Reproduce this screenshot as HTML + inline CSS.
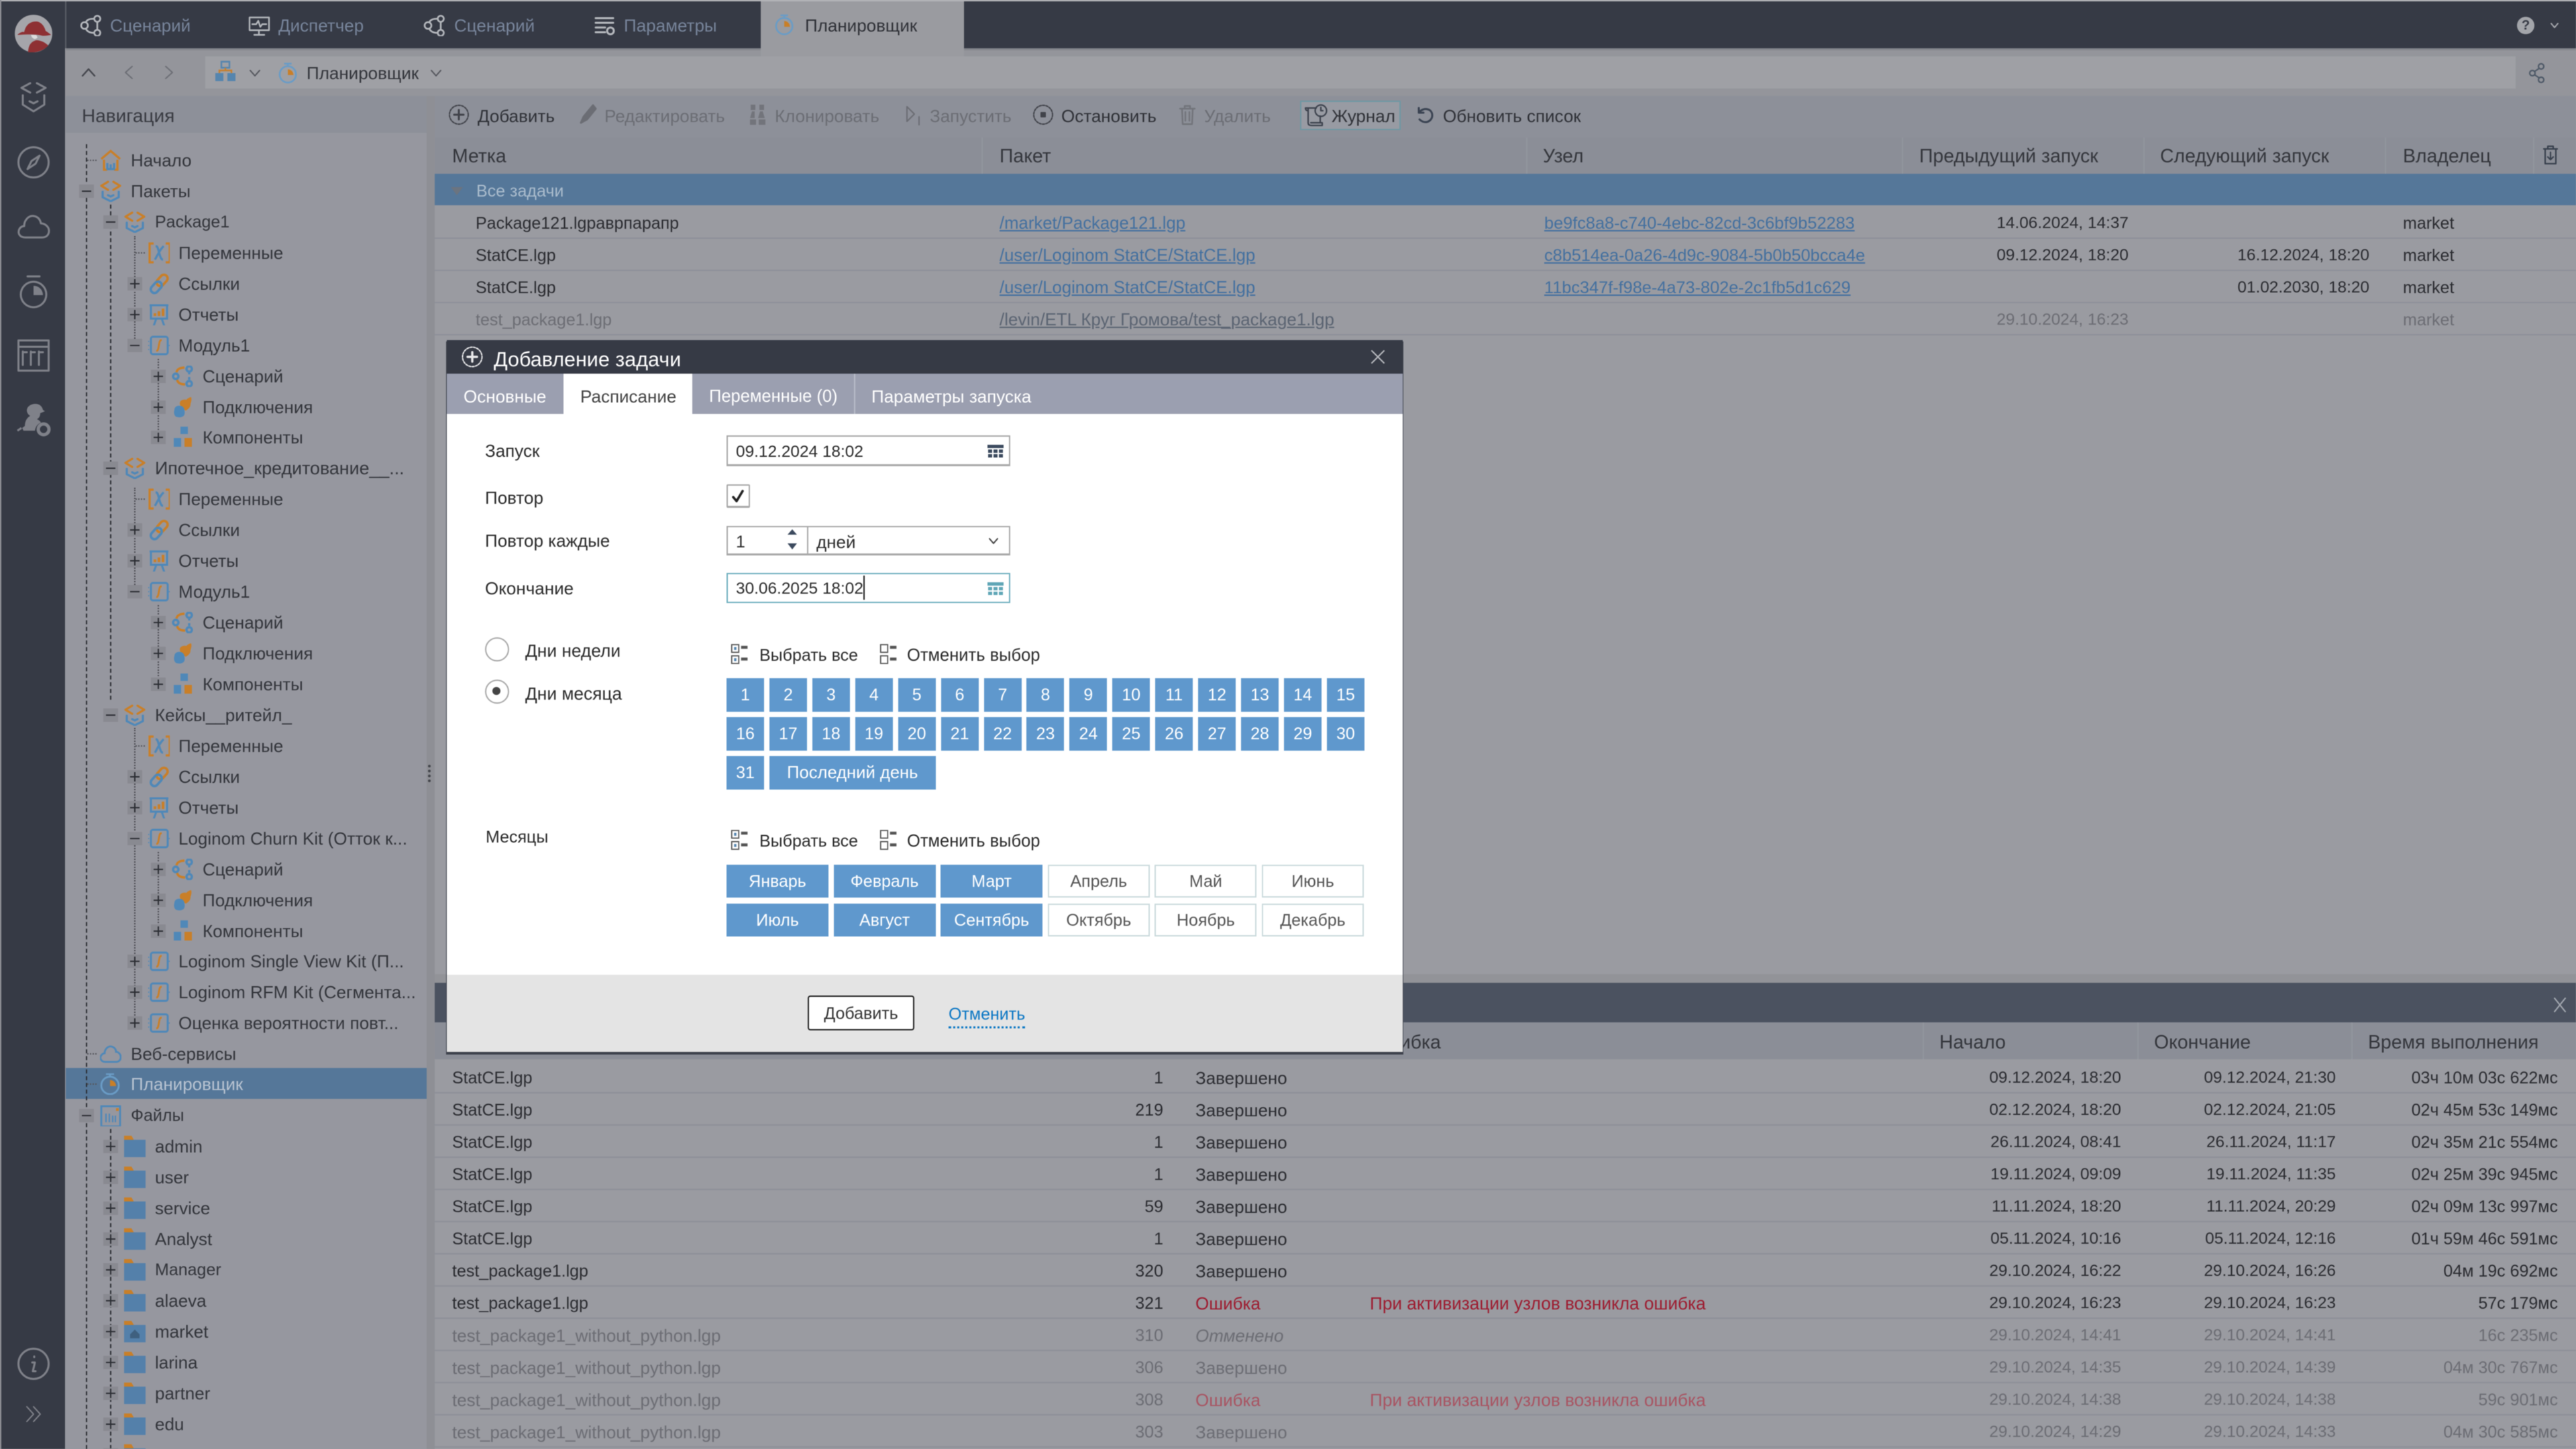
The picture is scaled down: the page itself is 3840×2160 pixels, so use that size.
<!DOCTYPE html>
<html lang="ru"><head><meta charset="utf-8"><title>Планировщик</title>
<style>
html,body{margin:0;padding:0;width:3840px;height:2160px;overflow:hidden;background:#9a9ba1}
body{font-family:"Liberation Sans","Noto Sans CJK SC",sans-serif;font-size:25px;color:#36383e;position:relative}
#root{position:absolute;left:0;top:0;width:3840px;height:2160px;overflow:hidden;filter:blur(.5px)}
.a,.b{position:absolute}
.x{position:absolute;white-space:nowrap;height:40px;line-height:40px}
svg.i{position:absolute;overflow:visible;fill:none}
svg.g{position:absolute;overflow:visible;fill:none;stroke-linecap:round;stroke-linejoin:round}
.t{position:absolute;left:98px;width:538px;height:46px;line-height:46px;font-size:26px;white-space:nowrap;color:#33353b}
.t span{position:absolute;top:0}
.t svg{position:absolute;top:7px;width:32px;height:32px;overflow:visible;fill:none}
.t b{position:absolute;top:13px;width:22px;height:20px;background:#898a91;display:block}
.t b:before{content:"";position:absolute;left:4px;top:9px;width:14px;height:2px;background:#2c2e34}
.t b.p:after{content:"";position:absolute;left:10px;top:3px;width:2px;height:14px;background:#2c2e34}
.t u{position:absolute;top:22px;height:0;width:14px;border-top:2px dotted #55565c;text-decoration:none;display:block}
.l0 span{left:97px}.l0 svg{left:51px}.l0 b{left:20px}.l0 u{left:32px}
.l1 span{left:133px}.l1 svg{left:87px}.l1 b{left:56px}.l1 u{left:68px}
.l2 span{left:168px}.l2 svg{left:123px}.l2 b{left:92px}.l2 u{left:104px}
.l3 span{left:204px}.l3 svg{left:158px}.l3 b{left:127px}.l3 u{left:139px}
.v{position:absolute;width:0;border-left:2px dotted #4a4b51}
.vd{border-left:2px dashed #2c2e34}
.tt{position:absolute;top:18px;height:40px;line-height:40px;color:#77849a;font-size:26px;white-space:nowrap}
.tb{position:absolute;top:152px;height:42px;line-height:42px;font-size:26px;color:#2f3137;white-space:nowrap}
.dis{color:#6b6d74}
.th{position:absolute;top:213px;height:40px;line-height:40px;font-size:28.4px;color:#34363c;white-space:nowrap}
.sep{position:absolute;width:2px;background:#92959e}
.r{position:absolute;left:648px;width:3192px;height:46px;border-bottom:2px solid #8d9099;line-height:50px;font-size:25px;white-space:nowrap;color:#2b2c31}
.r span{position:absolute;top:0}
.r.dim{color:#6c6d74}
.r a{color:#44709f;text-decoration:underline;font-size:25.7px}
.r.dim a{color:#5b6472;font-size:25.9px}
.c3 a{font-size:25.3px}
.c1{left:61px}.c2{left:842px}.c3{left:1654px}.c4{right:667px;font-size:24.4px}.c5{right:308px;font-size:24.4px}.c6{left:2934px}
.n{left:26px}.k{right:2106px}.s{left:1134px;font-size:26px}.o{left:1394px;font-size:26.2px}.h{right:678px;font-size:24.4px}.j{right:358px;font-size:24.4px}.w{right:27px}
.dim .n{font-size:26px}
.red{color:#9d1c30}.r.dim .red{color:#a85462}
.f{position:absolute;height:40px;line-height:40px;white-space:nowrap;font-size:26px;color:#2b2b2b}
.days{position:absolute;left:1083px;top:1011px;display:grid;grid-template-columns:repeat(15,56px);column-gap:7.93px;grid-auto-rows:50px;row-gap:8px}
.days div,.mon div{background:#5f98cd;color:#fff;text-align:center;line-height:51px;font-size:25px}
.mon{position:absolute;left:1083px;top:1289px;display:grid;grid-template-columns:repeat(6,152px);column-gap:7.6px;grid-auto-rows:49px;row-gap:9px}
.mon div.off{background:#fff;color:#555;box-shadow:inset 0 0 0 2px #cbdadd;}
.inp{position:absolute;background:#fff;box-sizing:border-box;border:2px solid #a9a9a9;border-bottom:3px solid #a9a9a9}
</style></head><body><div id="root">
<svg width="0" height="0" style="position:absolute"><defs>
<symbol id="pkg" viewBox="0 0 32 32"><g fill="none" stroke-width="3.2" stroke-linecap="round" stroke-linejoin="round"><path d="M12 2 2 8l10 6M20 2l10 6-10 6" stroke="#c97f28"/><path d="M4 17v8l12 6 12-6v-8M12 22l4 2 4-2" stroke="#4f88b8"/></g></symbol>
<symbol id="home" viewBox="0 0 32 32"><g fill="none" stroke-width="3.2"><path d="M2 14 16 2l14 12M6 15v15h5M26 15v15h-5" stroke="#c97f28"/><path d="M11 20v9h10v-9M16 22v7" stroke="#4f88b8"/></g></symbol>
<symbol id="var" viewBox="0 0 32 32"><g fill="none" stroke-width="3.2"><path d="M8 2H2v28h6M26 2h6v28h-6" stroke="#c97f28"/><path d="M11 6c3 0 3 2 5 9s3 11 6 11M23 6c-5 4-9 13-13 20" stroke="#4f88b8"/></g></symbol>
<symbol id="link" viewBox="0 0 32 32"><g fill="none" stroke-width="3.6"><rect x="15" y="1" width="11" height="19" rx="5.5" transform="rotate(42 20 11)" stroke="#c97f28"/><rect x="6" y="12" width="11" height="19" rx="5.5" transform="rotate(42 12 22)" stroke="#4f88b8"/></g></symbol>
<symbol id="rep" viewBox="0 0 32 32"><g fill="none" stroke-width="3"><path d="M2 2h28M4 2v20h24V2M12 22 8 33M20 22l4 11" stroke="#4f88b8"/></g><path d="M8 14h4v4H8zM14 11h4v7h-4zM20 7h4v11h-4z" fill="#c97f28"/></symbol>
<symbol id="mod" viewBox="0 0 32 32"><rect x="4" y="3" width="25" height="26" rx="3" fill="none" stroke="#4f88b8" stroke-width="3"/><path d="M0 9v2M0 15v2M0 21v2M32 15v2" stroke="#4f88b8" stroke-width="2.6"/><path d="M20 8c-3 0-3 2-4 7s-1 9-4 9" fill="none" stroke="#c97f28" stroke-width="2.8"/></symbol>
<symbol id="sc" viewBox="0 0 32 32"><g fill="none" stroke-width="3.4"><path d="M7 10c1-5 6-7 12-7M8 21c1 5 5 7 12 7" stroke="#c97f28"/><circle cx="26" cy="5" r="4" stroke="#4f88b8"/><circle cx="6" cy="16" r="4" stroke="#4f88b8"/><circle cx="26" cy="27" r="4" stroke="#4f88b8"/><path d="M26 10v3M26 17v4" stroke="#4f88b8"/></g></symbol>
<symbol id="con" viewBox="0 0 32 32"><path d="M12 10c0-5 7-6 10-5 1-2 5-4 7-4 1 4 0 7-1 10 0 6-4 8-7 10-4-2-9-6-9-11z" fill="#c97f28"/><path d="M4 20c0-5 5-7 9-6 3 0 6 3 6 7 1 4 0 8-3 9-3 2-8 1-10 0-3-3-3-7-2-10z" fill="#4f88b8"/></symbol>
<symbol id="cmp" viewBox="0 0 32 32"><path d="M13 0h11v11H13zM3 17h11v13H3z" fill="#4f88b8"/><path d="M19 17h11v13H19z" fill="#c97f28"/></symbol>
<symbol id="fol" viewBox="0 0 32 32"><path d="M0 0h11l4 7H0z" fill="#c97f28"/><path d="M0 6h32v27H0z" fill="#5480aa"/></symbol>
<symbol id="folh" viewBox="0 0 32 32"><path d="M0 0h11l4 7H0z" fill="#c97f28"/><path d="M0 6h32v27H0z" fill="#5480aa"/><path d="M9 20l7-7 7 7v6H9z" fill="#3f607f"/></symbol>
<symbol id="cloud" viewBox="0 0 32 32"><path d="M8 28C2 28 0 23 1 20s4-5 6-5c0-6 5-11 10-10 5 1 7 5 7 8 4 0 7 4 7 8s-3 7-7 7z" fill="none" stroke="#4f88b8" stroke-width="2.8"/></symbol>
<symbol id="clk" viewBox="0 0 32 32"><g fill="none" stroke-width="2.8"><circle cx="15" cy="18" r="13" stroke="#6a9cc6"/><path d="M9 1h12M15 1v4" stroke="#6a9cc6"/></g><path d="M15 10v9h9c0-5-4-9-9-9z" fill="#c97f28"/></symbol>
<symbol id="fil" viewBox="0 0 32 32"><rect x="2" y="2" width="28" height="30" fill="none" stroke="#4f88b8" stroke-width="2.8"/><path d="M9 26V13M14 26V13M19 26V16M23 26V16" stroke="#4f88b8" stroke-width="2.2"/><path d="M24 5h4v4h-4z" fill="#c97f28"/></symbol>
<symbol id="grey" viewBox="0 0 32 32"><g fill="none" stroke="#b4b7bc" stroke-width="2.6"><circle cx="7" cy="16" r="5"/><circle cx="26" cy="6" r="4.5"/><circle cx="26" cy="27" r="4.5"/><path d="M9 11c2-4 6-5 12-5M9 21c2 4 6 6 12 6M26 11v11"/></g></symbol>
<symbol id="selall" viewBox="0 0 32 36"><g fill="none" stroke="#555" stroke-width="2"><rect x="2" y="2" width="12" height="13"/><rect x="2" y="21" width="12" height="13"/></g><path d="M18 4h11v5H18zM18 24h11v5H18z" fill="#555"/><path d="M6 6h4v5H6zM6 25h4v5H6z" fill="#5585ae"/></symbol>
<symbol id="selnon" viewBox="0 0 32 36"><g fill="none" stroke="#555" stroke-width="2"><rect x="2" y="2" width="12" height="13"/><rect x="2" y="21" width="12" height="13"/></g><path d="M18 4h11v5H18zM18 24h11v5H18z" fill="#555"/></symbol>
</defs></svg>

<!-- background blocks -->
<div class="a" style="left:0;top:0;width:97px;height:2160px;background:#363a45"></div>
<div class="a" style="left:97px;top:0;width:2px;height:72px;background:#5a5d66"></div>
<div class="a" style="left:99px;top:0;width:3741px;height:72px;background:#363a45"></div>
<div class="a" style="left:98px;top:72px;width:3742px;height:71px;background:#94959b"></div>
<div class="a" style="left:98px;top:72px;width:3742px;height:3px;background:#85878d"></div>
<div class="a" style="left:306px;top:84px;width:3444px;height:48px;background:#9fa0a5"></div>
<div class="a" style="left:1134px;top:0;width:303px;height:84px;background:#9a9ba0"></div>
<div class="a" style="left:98px;top:143px;width:538px;height:55px;background:#8d9099"></div>
<div class="a" style="left:98px;top:198px;width:538px;height:1962px;background:#96979f"></div>
<div class="a" style="left:636px;top:143px;width:12px;height:2017px;background:#8e8f95"></div>
<div class="a" style="left:648px;top:143px;width:3192px;height:62px;background:#8d9099"></div>
<div class="a" style="left:648px;top:205px;width:3192px;height:54px;background:#8b8e97"></div>
<div class="a" style="left:648px;top:259px;width:3192px;height:47px;background:#557799"></div>
<div class="a" style="left:648px;top:306px;width:3192px;height:1152px;background:#9a9ba1"></div>
<div class="a" style="left:648px;top:1452px;width:3192px;height:13px;background:#929398"></div>
<div class="a" style="left:648px;top:1465px;width:3192px;height:59px;background:#4b5260"></div>
<div class="a" style="left:648px;top:1524px;width:3192px;height:55px;background:#8b8e97"></div>
<div class="a" style="left:0;top:0;width:3840px;height:2px;background:#b7b8bc"></div>
<div class="a" style="left:0;top:0;width:2px;height:2160px;background:#8b8c92"></div>
<div class="a" style="left:98px;top:1592px;width:538px;height:46px;background:#557799"></div>

<!-- left rail -->
<svg class="i" style="left:22px;top:22px" width="56" height="56" viewBox="0 0 56 56"><circle cx="28" cy="28" r="28" fill="#a5a5aa"/><path d="M4 30c4-4 8-5 10-4 2-10 8-16 18-16 6 0 12 6 14 14 3 2 6 4 8 6-6 1-10 2-14 1-6-2-20-2-36-1z" fill="#8e3033"/><path d="M20 56c0-10 4-16 12-18 8 0 14 4 18 8-6 6-14 10-24 10z" fill="#8e3033"/><path d="M24 30c2 6 6 8 10 4l-2-4z" fill="#dcdcdc"/></svg>
<svg class="g" style="left:30px;top:122px" width="40" height="46" viewBox="0 0 40 46" stroke="#7f8189" stroke-width="3"><path d="M15 2 2 9l13 7M25 2l13 7-13 7M4 20v14l16 10 16-10V20M14 29l6 3 6-3"/></svg>
<svg class="g" style="left:26px;top:218px" width="48" height="48" viewBox="0 0 48 48" stroke="#7f8189" stroke-width="3"><circle cx="24" cy="24" r="22.5"/><path d="M33 14 21 22l-6 12 12-8z"/></svg>
<svg class="g" style="left:26px;top:320px" width="48" height="36" viewBox="0 0 48 36" stroke="#7f8189" stroke-width="3"><path d="M12 34C4 34 1 29 2 24s5-7 8-7c0-9 7-16 14-15 7 1 10 6 11 11 6 0 12 5 12 11s-4 10-10 10z"/></svg>
<svg class="g" style="left:29px;top:410px" width="42" height="50" viewBox="0 0 42 50" stroke="#7f8189" stroke-width="3"><circle cx="21" cy="29" r="19"/><path d="M12 2h18"/><path d="M21 16v14h14c0-8-6-14-14-14z" fill="#7f8189" stroke="none"/></svg>
<svg class="g" style="left:26px;top:506px" width="48" height="48" viewBox="0 0 48 48" stroke="#7f8189" stroke-width="3"><rect x="1.5" y="1.5" width="45" height="45"/><path d="M2 11h44M8 18v20M20 18v20M32 18v20M8 19h6M20 19h6M32 19h6"/></svg>
<svg class="i" style="left:26px;top:601px" width="50" height="50" viewBox="0 0 50 50"><path d="M14 11c0-6 6-10 13-10 6 0 10 4 11 9l3 2-7 3c0 5-2 7-5 9 3 1 5 3 6 5-5 2-8 6-9 12H9l-2-4 4-3c0-8 4-13 8-15-3-2-5-5-5-8z" fill="#7f8189"/><circle cx="39" cy="39" r="8" fill="none" stroke="#7f8189" stroke-width="5"/><path d="M0 41l6-4" stroke="#7f8189" stroke-width="3"/></svg>
<svg class="g" style="left:26px;top:2009px" width="48" height="48" viewBox="0 0 48 48" stroke="#7f8189" stroke-width="3"><circle cx="24" cy="24" r="22.5"/><path d="M22 22h4l-3 13h4M25 13v1"/></svg>
<svg class="g" style="left:38px;top:2096px" width="24" height="24" viewBox="0 0 24 24" stroke="#7f8189" stroke-width="2"><path d="M2 1l10 11L2 23M12 1l10 11-10 11"/></svg>

<!-- top tabs -->
<svg class="i" style="left:119px;top:22px" width="32" height="32"><use href="#grey"/></svg><div class="tt" style="left:164px">Сценарий</div>
<svg class="g" style="left:370px;top:24px" width="33" height="30" viewBox="0 0 33 30" stroke="#b4b7bc" stroke-width="2.4"><path d="M2 2h29v19H2zM16 21v6M9 28h15M6 12h6l3-5 3 9 3-4h6"/></svg><div class="tt" style="left:415px">Диспетчер</div>
<svg class="i" style="left:631px;top:22px" width="32" height="32"><use href="#grey"/></svg><div class="tt" style="left:677px">Сценарий</div>
<svg class="g" style="left:886px;top:24px" width="32" height="30" viewBox="0 0 32 30" stroke="#b4b7bc" stroke-width="3"><path d="M2 3h26M2 10h26M2 17h14M2 24h14"/><circle cx="24" cy="22" r="5"/></svg><div class="tt" style="left:930px">Параметры</div>
<svg class="i" style="left:1155px;top:20px" width="30" height="34"><use href="#clk"/></svg><div class="tt" style="left:1200px;color:#303238">Планировщик</div>
<svg class="g" style="left:3751px;top:24px" width="28" height="28" viewBox="0 0 28 28"><circle cx="14" cy="14" r="13" fill="#a3a5aa"/></svg><div class="x" style="left:3759px;top:18px;color:#363a45;font-weight:bold;font-size:20px">?</div>
<svg class="g" style="left:3802px;top:34px" width="12" height="8" viewBox="0 0 12 8" stroke="#a3a5aa" stroke-width="2"><path d="M1 1l5 6 5-6"/></svg>

<!-- address bar -->
<svg class="g" style="left:122px;top:102px" width="20" height="12" viewBox="0 0 20 12" stroke="#45474e" stroke-width="2.4"><path d="M1 11 10 1l9 10"/></svg>
<svg class="g" style="left:186px;top:98px" width="12" height="20" viewBox="0 0 12 20" stroke="#6d6f76" stroke-width="2"><path d="M11 1 1 10l10 9"/></svg>
<svg class="g" style="left:246px;top:98px" width="12" height="20" viewBox="0 0 12 20" stroke="#6d6f76" stroke-width="2"><path d="M1 1l10 9-10 9"/></svg>
<svg class="i" style="left:320px;top:92px" width="32" height="32" viewBox="0 0 32 32"><path d="M10 0h12v9H10z" fill="none" stroke="#5585ae" stroke-width="2.4"/><path d="M1 17h12v12H1zM19 17h12v12H19z" fill="#5585ae"/><path d="M16 9v4M7 17v-4h18v4" stroke="#c67f2e" stroke-width="2.4" fill="none"/></svg>
<svg class="g" style="left:372px;top:104px" width="16" height="10" viewBox="0 0 16 10" stroke="#55575e" stroke-width="2"><path d="M1 1l7 8 7-8"/></svg>
<svg class="i" style="left:415px;top:92px" width="30" height="34"><use href="#clk"/></svg>
<div class="x" style="left:457px;top:89px;font-size:26px;color:#33353b">Планировщик</div>
<svg class="g" style="left:642px;top:104px" width="16" height="10" viewBox="0 0 16 10" stroke="#55575e" stroke-width="2"><path d="M1 1l7 8 7-8"/></svg>
<svg class="g" style="left:3770px;top:94px" width="26" height="30" viewBox="0 0 26 30" stroke="#4f5a68" stroke-width="2.2"><circle cx="18" cy="5" r="4"/><circle cx="5" cy="15" r="4"/><circle cx="18" cy="25" r="4"/><path d="M9 12l6-4M9 18l6 4"/></svg>

<!-- nav header -->
<div class="x" style="left:122px;top:153px;font-size:28px;color:#383a41">Навигация</div>

<!-- tree lines -->
<div class="v vd" style="left:128px;top:215px;height:1945px"></div>
<div class="v vd" style="left:164px;top:305px;height:738px"></div>
<div class="v vd" style="left:164px;top:1683px;height:477px"></div>
<div class="v" style="left:200px;top:352px;height:160px"></div>
<div class="v" style="left:200px;top:727px;height:145px"></div>
<div class="v" style="left:200px;top:1085px;height:445px"></div>
<div class="v" style="left:235px;top:535px;height:110px"></div>
<div class="v" style="left:235px;top:902px;height:110px"></div>
<div class="v" style="left:235px;top:1270px;height:110px"></div>
<div class="a" style="left:638px;top:1140px;width:5px;height:26px;border-left:4px dotted #44464c"></div>

<!-- tree -->
<div class="t l0" style="top:216px"><u></u><svg><use href="#home"/></svg><span>Начало</span></div>
<div class="t l0" style="top:262px"><b></b><svg><use href="#pkg"/></svg><span>Пакеты</span></div>
<div class="t l1" style="top:308px"><b></b><svg><use href="#pkg"/></svg><span style="font-size:25px">Package1</span></div>
<div class="t l2" style="top:354px"><u></u><svg><use href="#var"/></svg><span>Переменные</span></div>
<div class="t l2" style="top:400px"><b class="p"></b><svg><use href="#link"/></svg><span>Ссылки</span></div>
<div class="t l2" style="top:446px"><b class="p"></b><svg><use href="#rep"/></svg><span>Отчеты</span></div>
<div class="t l2" style="top:492px"><b></b><svg><use href="#mod"/></svg><span>Модуль1</span></div>
<div class="t l3" style="top:538px"><b class="p"></b><svg><use href="#sc"/></svg><span>Сценарий</span></div>
<div class="t l3" style="top:584px"><b class="p"></b><svg><use href="#con"/></svg><span>Подключения</span></div>
<div class="t l3" style="top:629px"><b class="p"></b><svg><use href="#cmp"/></svg><span>Компоненты</span></div>
<div class="t l1" style="top:675px"><b></b><svg><use href="#pkg"/></svg><span style="font-size:26.8px">Ипотечное_кредитование__...</span></div>
<div class="t l2" style="top:721px"><u></u><svg><use href="#var"/></svg><span>Переменные</span></div>
<div class="t l2" style="top:767px"><b class="p"></b><svg><use href="#link"/></svg><span>Ссылки</span></div>
<div class="t l2" style="top:813px"><b class="p"></b><svg><use href="#rep"/></svg><span>Отчеты</span></div>
<div class="t l2" style="top:859px"><b></b><svg><use href="#mod"/></svg><span>Модуль1</span></div>
<div class="t l3" style="top:905px"><b class="p"></b><svg><use href="#sc"/></svg><span>Сценарий</span></div>
<div class="t l3" style="top:951px"><b class="p"></b><svg><use href="#con"/></svg><span>Подключения</span></div>
<div class="t l3" style="top:997px"><b class="p"></b><svg><use href="#cmp"/></svg><span>Компоненты</span></div>
<div class="t l1" style="top:1043px"><b></b><svg><use href="#pkg"/></svg><span>Кейсы__ритейл_</span></div>
<div class="t l2" style="top:1089px"><u></u><svg><use href="#var"/></svg><span>Переменные</span></div>
<div class="t l2" style="top:1135px"><b class="p"></b><svg><use href="#link"/></svg><span>Ссылки</span></div>
<div class="t l2" style="top:1181px"><b class="p"></b><svg><use href="#rep"/></svg><span>Отчеты</span></div>
<div class="t l2" style="top:1227px"><b></b><svg><use href="#mod"/></svg><span>Loginom Churn Kit (Отток к...</span></div>
<div class="t l3" style="top:1273px"><b class="p"></b><svg><use href="#sc"/></svg><span>Сценарий</span></div>
<div class="t l3" style="top:1319px"><b class="p"></b><svg><use href="#con"/></svg><span>Подключения</span></div>
<div class="t l3" style="top:1365px"><b class="p"></b><svg><use href="#cmp"/></svg><span>Компоненты</span></div>
<div class="t l2" style="top:1410px"><b class="p"></b><svg><use href="#mod"/></svg><span>Loginom Single View Kit (П...</span></div>
<div class="t l2" style="top:1456px"><b class="p"></b><svg><use href="#mod"/></svg><span>Loginom RFM Kit (Сегмента...</span></div>
<div class="t l2" style="top:1502px"><b class="p"></b><svg><use href="#mod"/></svg><span>Оценка вероятности повт...</span></div>
<div class="t l0" style="top:1548px"><u></u><svg><use href="#cloud"/></svg><span>Веб-сервисы</span></div>
<div class="t l0" style="top:1593px;color:#b9c4d2"><u></u><svg><use href="#clk"/></svg><span>Планировщик</span></div>
<div class="t l0" style="top:1640px"><b></b><svg><use href="#fil"/></svg><span style="font-size:25px">Файлы</span></div>
<div class="t l1" style="top:1686px"><b class="p"></b><svg><use href="#fol"/></svg><span>admin</span></div>
<div class="t l1" style="top:1732px"><b class="p"></b><svg><use href="#fol"/></svg><span>user</span></div>
<div class="t l1" style="top:1778px"><b class="p"></b><svg><use href="#fol"/></svg><span>service</span></div>
<div class="t l1" style="top:1824px"><b class="p"></b><svg><use href="#fol"/></svg><span>Analyst</span></div>
<div class="t l1" style="top:1870px"><b class="p"></b><svg><use href="#fol"/></svg><span style="font-size:25px">Manager</span></div>
<div class="t l1" style="top:1916px"><b class="p"></b><svg><use href="#fol"/></svg><span>alaeva</span></div>
<div class="t l1" style="top:1962px"><b class="p"></b><svg><use href="#folh"/></svg><span>market</span></div>
<div class="t l1" style="top:2008px"><b class="p"></b><svg><use href="#fol"/></svg><span>larina</span></div>
<div class="t l1" style="top:2054px"><b class="p"></b><svg><use href="#fol"/></svg><span>partner</span></div>
<div class="t l1" style="top:2100px"><b class="p"></b><svg><use href="#fol"/></svg><span>edu</span></div>
<div class="t l1" style="top:2146px"><b class="p"></b><svg><use href="#fol"/></svg></div>

<!-- toolbar -->
<svg class="g" style="left:669px;top:156px" width="30" height="30" viewBox="0 0 30 30" stroke="#41434a" stroke-width="2"><circle cx="15" cy="15" r="14" stroke-dasharray="3 2"/><path d="M15 8v14M8 15h14" stroke-width="3"/></svg>
<div class="tb" style="left:712px">Добавить</div>
<svg class="g" style="left:862px;top:154px" width="28" height="32" viewBox="0 0 28 32" stroke="#6b6d74" stroke-width="3"><path d="M22 3 8 20l-4 9 9-5 13-16z" fill="#6b6d74"/></svg>
<div class="tb dis" style="left:901px">Редактировать</div>
<svg class="i" style="left:1117px;top:156px" width="26" height="30" viewBox="0 0 26 30"><path d="M2 0h7v8H2zM15 0h7v8h-7zM4 10h4v10H1zM16 10h4l3 10H13zM1 22h9v8H1zM14 22h10v8H14z" fill="#72747b"/></svg>
<div class="tb dis" style="left:1155px">Клонировать</div>
<svg class="g" style="left:1350px;top:156px" width="24" height="32" viewBox="0 0 24 32" stroke="#6b6d74" stroke-width="2"><path d="M2 3l11 11L2 25zM20 18v12"/></svg>
<div class="tb dis" style="left:1386px">Запустить</div>
<svg class="g" style="left:1540px;top:156px" width="30" height="30" viewBox="0 0 30 30" stroke="#41434a" stroke-width="2"><circle cx="15" cy="15" r="14" stroke-dasharray="3 2"/><path d="M12 12h6v6h-6z" fill="#41434a"/></svg>
<div class="tb" style="left:1582px">Остановить</div>
<svg class="g" style="left:1757px;top:156px" width="26" height="30" viewBox="0 0 26 30" stroke="#72747b" stroke-width="2.4"><path d="M2 6h22M9 6V2h8v4M5 6l1 23h14l1-23M10 11v13M16 11v13"/></svg>
<div class="tb dis" style="left:1795px">Удалить</div>
<div class="a" style="left:1938px;top:150px;width:146px;height:40px;border:2px solid #6f98a3;background:#989ba3"></div>
<svg class="g" style="left:1944px;top:155px" width="36" height="34" viewBox="0 0 36 34" stroke="#3d434e" stroke-width="2.2"><path d="M2 6h16M6 6v22M2 6c0 3 2 4 4 4M6 28c0 3 2 4 5 4h16v-4H10M24 18v10"/><circle cx="25" cy="10" r="8.5"/><path d="M25 5v5h3"/></svg>
<div class="tb" style="left:1985px">Журнал</div>
<svg class="g" style="left:2113px;top:159px" width="24" height="25" viewBox="0 0 24 25" stroke="#3a4352" stroke-width="3"><path d="M2 2v7h7M3 8c5-7 19-6 19 5 0 6-5 10-10 10-4 0-7-2-9-4"/></svg>
<div class="tb" style="left:2151px">Обновить список</div>

<!-- table header -->
<div class="th" style="left:674px">Метка</div>
<div class="th" style="left:1490px">Пакет</div>
<div class="th" style="left:2300px">Узел</div>
<div class="th" style="left:2861px">Предыдущий запуск</div>
<div class="th" style="left:3220px">Следующий запуск</div>
<div class="th" style="left:3582px">Владелец</div>
<div class="sep" style="left:1463px;top:205px;height:54px"></div>
<div class="sep" style="left:2275px;top:205px;height:54px"></div>
<div class="sep" style="left:2835px;top:205px;height:54px"></div>
<div class="sep" style="left:3195px;top:205px;height:54px"></div>
<div class="sep" style="left:3555px;top:205px;height:54px"></div>
<div class="sep" style="left:3776px;top:205px;height:54px"></div>
<svg class="g" style="left:3790px;top:216px" width="24" height="30" viewBox="0 0 24 30" stroke="#39414e" stroke-width="2.2"><path d="M2 6h20M8 6V2h8v4M4 6v22h16V6M12 11v11M8 18l4 4 4-4"/></svg>

<svg class="i" style="left:672px;top:279px" width="18" height="12" viewBox="0 0 18 12"><path d="M0 0h18L9 12z" fill="#6b7480"/></svg>
<div class="x" style="left:710px;top:265px;color:#a9bbcc;font-size:25px">Все задачи</div>

<div class="r" style="top:308px"><span class="c1">Package121.lgpаврпарапр</span><span class="c2"><a>/market/Package121.lgp</a></span><span class="c3"><a>be9fc8a8-c740-4ebc-82cd-3c6bf9b52283</a></span><span class="c4">14.06.2024, 14:37</span><span class="c6">market</span></div>
<div class="r" style="top:356px"><span class="c1">StatCE.lgp</span><span class="c2"><a>/user/Loginom StatCE/StatCE.lgp</a></span><span class="c3"><a>c8b514ea-0a26-4d9c-9084-5b0b50bcca4e</a></span><span class="c4">09.12.2024, 18:20</span><span class="c5">16.12.2024, 18:20</span><span class="c6">market</span></div>
<div class="r" style="top:404px"><span class="c1">StatCE.lgp</span><span class="c2"><a>/user/Loginom StatCE/StatCE.lgp</a></span><span class="c3"><a>11bc347f-f98e-4a73-802e-2c1fb5d1c629</a></span><span class="c5">01.02.2030, 18:20</span><span class="c6">market</span></div>
<div class="r dim" style="top:452px"><span class="c1">test_package1.lgp</span><span class="c2"><a>/levin/ETL Круг Громова/test_package1.lgp</a></span><span class="c4">29.10.2024, 16:23</span><span class="c6">market</span></div>

<!-- bottom panel -->
<svg class="g" style="left:3807px;top:1487px" width="18" height="22" viewBox="0 0 18 22" stroke="#a3a8b0" stroke-width="2"><path d="M1 1l16 20M17 1 1 21"/></svg>
<div class="th" style="left:2042px;top:1534px">Ошибка</div>
<div class="th" style="left:2891px;top:1534px">Начало</div>
<div class="th" style="left:3211px;top:1534px">Окончание</div>
<div class="th" style="left:3530px;top:1534px">Время выполнения</div>
<div class="sep" style="left:2866px;top:1524px;height:55px"></div>
<div class="sep" style="left:3186px;top:1524px;height:55px"></div>
<div class="sep" style="left:3505px;top:1524px;height:55px"></div>

<div class="r" style="top:1582px"><span class="n">StatCE.lgp</span><span class="k">1</span><span class="s">Завершено</span><span class="h">09.12.2024, 18:20</span><span class="j">09.12.2024, 21:30</span><span class="w">03ч 10м 03с 622мс</span></div>
<div class="r" style="top:1630px"><span class="n">StatCE.lgp</span><span class="k">219</span><span class="s">Завершено</span><span class="h">02.12.2024, 18:20</span><span class="j">02.12.2024, 21:05</span><span class="w">02ч 45м 53с 149мс</span></div>
<div class="r" style="top:1678px"><span class="n">StatCE.lgp</span><span class="k">1</span><span class="s">Завершено</span><span class="h">26.11.2024, 08:41</span><span class="j">26.11.2024, 11:17</span><span class="w">02ч 35м 21с 554мс</span></div>
<div class="r" style="top:1726px"><span class="n">StatCE.lgp</span><span class="k">1</span><span class="s">Завершено</span><span class="h">19.11.2024, 09:09</span><span class="j">19.11.2024, 11:35</span><span class="w">02ч 25м 39с 945мс</span></div>
<div class="r" style="top:1774px"><span class="n">StatCE.lgp</span><span class="k">59</span><span class="s">Завершено</span><span class="h">11.11.2024, 18:20</span><span class="j">11.11.2024, 20:29</span><span class="w">02ч 09м 13с 997мс</span></div>
<div class="r" style="top:1822px"><span class="n">StatCE.lgp</span><span class="k">1</span><span class="s">Завершено</span><span class="h">05.11.2024, 10:16</span><span class="j">05.11.2024, 12:16</span><span class="w">01ч 59м 46с 591мс</span></div>
<div class="r" style="top:1870px"><span class="n">test_package1.lgp</span><span class="k">320</span><span class="s">Завершено</span><span class="h">29.10.2024, 16:22</span><span class="j">29.10.2024, 16:26</span><span class="w">04м 19с 692мс</span></div>
<div class="r" style="top:1918px"><span class="n">test_package1.lgp</span><span class="k">321</span><span class="s red">Ошибка</span><span class="o red">При активизации узлов возникла ошибка</span><span class="h">29.10.2024, 16:23</span><span class="j">29.10.2024, 16:23</span><span class="w">57с 179мс</span></div>
<div class="r dim" style="top:1966px"><span class="n">test_package1_without_python.lgp</span><span class="k">310</span><span class="s" style="font-style:italic">Отменено</span><span class="h">29.10.2024, 14:41</span><span class="j">29.10.2024, 14:41</span><span class="w">16с 235мс</span></div>
<div class="r dim" style="top:2014px"><span class="n">test_package1_without_python.lgp</span><span class="k">306</span><span class="s">Завершено</span><span class="h">29.10.2024, 14:35</span><span class="j">29.10.2024, 14:39</span><span class="w">04м 30с 767мс</span></div>
<div class="r dim" style="top:2062px"><span class="n">test_package1_without_python.lgp</span><span class="k">308</span><span class="s red">Ошибка</span><span class="o red">При активизации узлов возникла ошибка</span><span class="h">29.10.2024, 14:38</span><span class="j">29.10.2024, 14:38</span><span class="w">59с 901мс</span></div>
<div class="r dim" style="top:2110px"><span class="n">test_package1_without_python.lgp</span><span class="k">303</span><span class="s">Завершено</span><span class="h">29.10.2024, 14:29</span><span class="j">29.10.2024, 14:33</span><span class="w">04м 30с 585мс</span></div>

<!-- dialog -->
<div class="a" style="left:666px;top:507px;width:1425px;height:1061px;background:#fff;box-shadow:0 3px 0 1px #3e424c"></div>
<div class="a" style="left:666px;top:507px;width:1425px;height:50px;background:#363a45"></div>
<div class="a" style="left:666px;top:557px;width:1425px;height:60px;background:#9b9fb0"></div>
<div class="a" style="left:666px;top:1453px;width:1425px;height:115px;background:#e4e4e4"></div>
<svg class="g" style="left:688px;top:516px" width="32" height="32" viewBox="0 0 32 32" stroke="#e8e8ea" stroke-width="2"><circle cx="16" cy="16" r="14.5" stroke-dasharray="3 2"/><path d="M16 9v14M9 16h14" stroke-width="3.4"/></svg>
<div class="x" style="left:736px;top:516px;color:#fff;font-size:30.5px">Добавление задачи</div>
<svg class="g" style="left:2044px;top:522px" width="20" height="20" viewBox="0 0 20 20" stroke="#b6b8bd" stroke-width="2"><path d="M1 1l18 18M19 1 1 19"/></svg>
<div class="x" style="left:691px;top:571px;color:#fff;font-size:26px">Основные</div>
<div class="a" style="left:840px;top:557px;width:192px;height:60px;background:#fff"></div>
<div class="x" style="left:865px;top:571px;color:#444;font-size:26px">Расписание</div>
<div class="x" style="left:1057px;top:571px;color:#fff;font-size:25.5px">Переменные (0)</div>
<div class="a" style="left:1273px;top:557px;width:2px;height:60px;background:#b9bdc9"></div>
<div class="x" style="left:1299px;top:571px;color:#fff;font-size:26px">Параметры запуска</div>

<div class="f" style="left:723px;top:652px">Запуск</div>
<div class="inp" style="left:1083px;top:649px;width:423px;height:46px"></div>
<div class="f" style="left:1097px;top:654px;font-size:24.4px">09.12.2024 18:02</div>
<svg class="i" style="left:1472px;top:663px" width="24" height="20" viewBox="0 0 24 20"><path d="M0 0h24v5H0zM1 7h6v5H1zM9 7h6v5H9zM17 7h6v5h-6zM1 14h6v5H1zM9 14h6v5H9zM17 14h6v5h-6z" fill="#3c4a5e"/></svg>
<div class="f" style="left:723px;top:722px">Повтор</div>
<div class="inp" style="left:1083px;top:722px;width:35px;height:35px;border-radius:2px"></div>
<svg class="g" style="left:1090px;top:730px" width="20" height="20" viewBox="0 0 20 20" stroke="#222" stroke-width="3.6"><path d="M3 11l5 6 9-15"/></svg>
<div class="f" style="left:723px;top:786px">Повтор каждые</div>
<div class="inp" style="left:1083px;top:784px;width:423px;height:44px"></div>
<div class="a" style="left:1203px;top:785px;width:2px;height:42px;background:#a9a9a9"></div>
<div class="f" style="left:1097px;top:788px;font-size:25px">1</div>
<svg class="i" style="left:1173px;top:789px" width="16" height="32" viewBox="0 0 16 32"><path d="M8 0l7 8H1zM1 21h14l-7 9z" fill="#3c4a5e"/></svg>
<div class="f" style="left:1217px;top:788px;font-size:26px">дней</div>
<svg class="g" style="left:1474px;top:802px" width="14" height="9" viewBox="0 0 14 9" stroke="#444" stroke-width="2"><path d="M1 1l6 7 6-7"/></svg>
<div class="f" style="left:723px;top:857px">Окончание</div>
<div class="inp" style="left:1083px;top:854px;width:423px;height:45px;border:2px solid #6fb0bf"></div>
<div class="f" style="left:1097px;top:858px;font-size:24.4px">30.06.2025 18:02</div>
<div class="a" style="left:1287px;top:858px;width:2px;height:36px;background:#222"></div>
<svg class="i" style="left:1472px;top:868px" width="24" height="20" viewBox="0 0 24 20"><path d="M0 0h24v5H0zM1 7h6v5H1zM9 7h6v5H9zM17 7h6v5h-6zM1 14h6v5H1zM9 14h6v5H9zM17 14h6v5h-6z" fill="#5fa6b6"/></svg>

<div class="a" style="left:723px;top:950px;width:32px;height:32px;border:2px solid #a9a9a9;border-radius:50%;background:#fff"></div>
<div class="f" style="left:783px;top:950px;font-size:26.3px">Дни недели</div>
<div class="a" style="left:723px;top:1013px;width:32px;height:32px;border:2px solid #a9a9a9;border-radius:50%;background:#fff"></div>
<div class="a" style="left:734px;top:1024px;width:12px;height:12px;border-radius:50%;background:#444"></div>
<div class="f" style="left:783px;top:1014px;font-size:26.3px">Дни месяца</div>
<svg class="i" style="left:1089px;top:959px" width="28" height="32" viewBox="0 0 32 36"><use href="#selall"/></svg>
<div class="f" style="left:1132px;top:957px;font-size:25px">Выбрать все</div>
<svg class="i" style="left:1311px;top:959px" width="28" height="32" viewBox="0 0 32 36"><use href="#selnon"/></svg>
<div class="f" style="left:1352px;top:957px;font-size:25.5px">Отменить выбор</div>

<div class="days">
<div>1</div><div>2</div><div>3</div><div>4</div><div>5</div><div>6</div><div>7</div><div>8</div><div>9</div><div>10</div><div>11</div><div>12</div><div>13</div><div>14</div><div>15</div>
<div>16</div><div>17</div><div>18</div><div>19</div><div>20</div><div>21</div><div>22</div><div>23</div><div>24</div><div>25</div><div>26</div><div>27</div><div>28</div><div>29</div><div>30</div>
<div>31</div><div style="grid-column:span 4;font-size:25.6px">Последний день</div>
</div>

<div class="f" style="left:724px;top:1228px;font-size:25px">Месяцы</div>
<svg class="i" style="left:1089px;top:1236px" width="28" height="32" viewBox="0 0 32 36"><use href="#selall"/></svg>
<div class="f" style="left:1132px;top:1234px;font-size:25px">Выбрать все</div>
<svg class="i" style="left:1311px;top:1236px" width="28" height="32" viewBox="0 0 32 36"><use href="#selnon"/></svg>
<div class="f" style="left:1352px;top:1234px;font-size:25.5px">Отменить выбор</div>
<div class="mon">
<div>Январь</div><div>Февраль</div><div>Март</div><div class="off">Апрель</div><div class="off">Май</div><div class="off">Июнь</div>
<div>Июль</div><div>Август</div><div>Сентябрь</div><div class="off">Октябрь</div><div class="off">Ноябрь</div><div class="off">Декабрь</div>
</div>

<div class="a" style="left:1204px;top:1484px;width:155px;height:48px;background:#fff;border:2px solid #222;border-radius:4px;text-align:center;line-height:50px;font-size:25px;color:#333">Добавить</div>
<div class="f" style="left:1414px;top:1492px;font-size:25px;color:#0c77c4;border-bottom:3px dotted #0c77c4;height:38px">Отменить</div>
</div></body></html>
